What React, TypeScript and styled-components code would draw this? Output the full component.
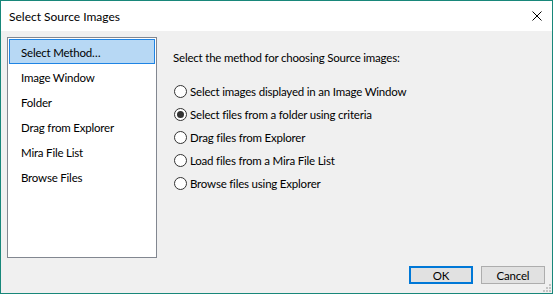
import React, { useState } from 'react';
import styled, { createGlobalStyle } from 'styled-components';

const GlobalStyle = createGlobalStyle`
  html, body {
    margin: 0;
    padding: 0;
    background: #ffffff;
  }
  body {
    font-family: Lato, "Liberation Sans", Arial, sans-serif;
    font-size: 11.5px;
    letter-spacing: -0.2px;
    color: #000;
  }
`;

const Window = styled.div`
  width: 553px;
  height: 294px;
  box-sizing: border-box;
  border: 1px solid #18877a;
  display: flex;
  flex-direction: column;
  background: #f0f0f0;
`;

const TitleBar = styled.div`
  height: 30px;
  flex: 0 0 30px;
  background: #ffffff;
  display: flex;
  align-items: center;
  justify-content: space-between;
  padding: 0 10px 0 8px;
`;

const Title = styled.span`
  font-size: 12px;
  letter-spacing: 0;
  color: #000;
`;

const CloseIcon = styled.svg`
  width: 10px;
  height: 10px;
`;

const Body = styled.div`
  flex: 1;
  display: flex;
  flex-direction: column;
  padding: 6px 7px 9px 6px;
`;

const Main = styled.div`
  display: flex;
  height: 221px;
`;

/* 왼쪽 목록 */
const List = styled.div`
  width: 150px;
  box-sizing: border-box;
  border: 1px solid #828790;
  background: #ffffff;
  padding: 1px;
  display: flex;
  flex-direction: column;
`;

const ListItem = styled.div<{ selected?: boolean }>`
  height: 25px;
  box-sizing: border-box;
  display: flex;
  align-items: center;
  padding-left: 11px;
  padding-top: 2px;
  border: 1px solid ${p => (p.selected ? '#1f84e4' : 'transparent')};
  background: ${p => (p.selected ? '#b7d8f4' : 'transparent')};
`;

/* 오른쪽 선택 영역 */
const Options = styled.div`
  flex: 1;
  padding: 13px 0 0 16px;
  display: flex;
  flex-direction: column;
`;

const Prompt = styled.div`
  line-height: 15px;
  margin-bottom: 15px;
`;

const RadioRow = styled.label`
  height: 23px;
  display: flex;
  align-items: center;
  cursor: default;
`;

const RadioCircle = styled.span<{ checked?: boolean }>`
  width: 13px;
  height: 13px;
  box-sizing: border-box;
  border: 1px solid #333333;
  border-radius: 50%;
  background: #ffffff;
  margin-left: 1px;
  margin-right: 3px;
  display: flex;
  align-items: center;
  justify-content: center;

  &::after {
    content: '';
    width: 7px;
    height: 7px;
    border-radius: 50%;
    background: ${p => (p.checked ? '#333333' : 'transparent')};
  }
`;

const Footer = styled.div`
  margin-top: auto;
  display: flex;
  justify-content: flex-end;
  gap: 8px;
  position: relative;
`;

const Button = styled.button<{ primary?: boolean }>`
  width: 64px;
  height: 18px;
  box-sizing: border-box;
  font-family: Lato, "Liberation Sans", Arial, sans-serif;
  font-size: 11.5px;
  letter-spacing: -0.2px;
  color: #000;
  background: #e1e1e1;
  border: ${p => (p.primary ? '2px solid #0078d7' : '1px solid #adadad')};
  padding: 0;
  display: flex;
  align-items: center;
  justify-content: center;
`;

const Grip = styled.svg`
  position: absolute;
  right: -7px;
  bottom: -9px;
  width: 11px;
  height: 11px;
`;

const methods = ['Select Method\u2026', 'Image Window', 'Folder', 'Drag from Explorer', 'Mira File List', 'Browse Files'];

const options = [
  'Select images displayed in an Image Window',
  'Select files from a folder using criteria',
  'Drag files from Explorer',
  'Load files from a Mira File List',
  'Browse files using Explorer',
];

export default function App() {
  const [choice, setChoice] = useState(1);

  return (
    <>
      <GlobalStyle />
      <Window>
        <TitleBar>
          <Title>Select Source Images</Title>
          <CloseIcon viewBox="0 0 10 10">
            <path d="M0.5 0.5 L9.5 9.5 M9.5 0.5 L0.5 9.5" stroke="#000" strokeWidth="1" fill="none" />
          </CloseIcon>
        </TitleBar>
        <Body>
          <Main>
            <List>
              {methods.map((m, i) => (
                <ListItem key={m} selected={i === 0}>{m}</ListItem>
              ))}
            </List>
            <Options>
              <Prompt>Select the method for choosing Source images:</Prompt>
              {options.map((o, i) => (
                <RadioRow key={o} onClick={() => setChoice(i)}>
                  <RadioCircle checked={choice === i} />
                  {o}
                </RadioRow>
              ))}
            </Options>
          </Main>
          <Footer>
            <Button primary>OK</Button>
            <Button>Cancel</Button>
            <Grip viewBox="0 0 11 11">
              {[[8, 0], [8, 3], [5, 3], [8, 6], [5, 6], [2, 6]].map(([x, y]) => (
                <rect key={`${x}-${y}`} x={x} y={y + 2} width="2" height="2" fill="#c4c4c4" />
              ))}
            </Grip>
          </Footer>
        </Body>
      </Window>
    </>
  );
}
